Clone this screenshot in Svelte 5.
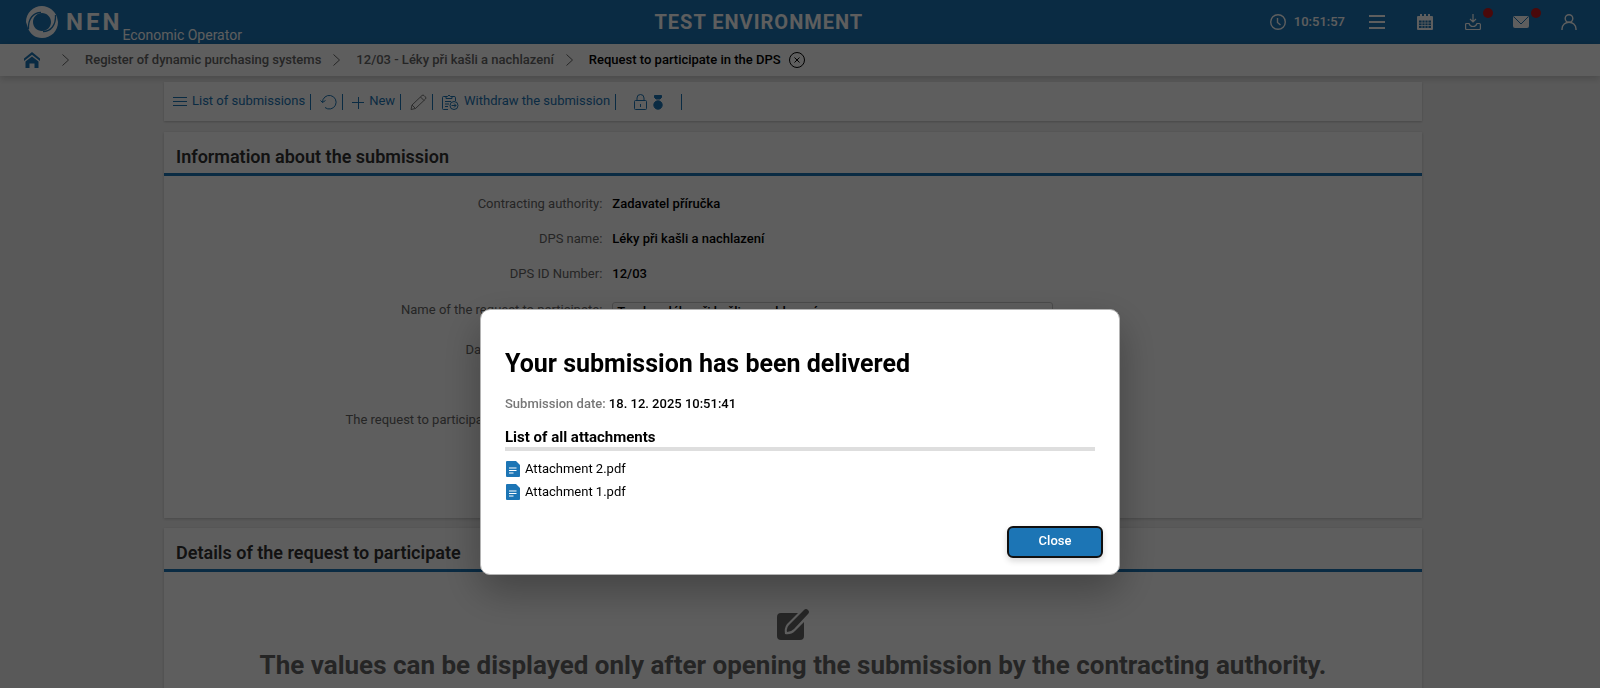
<script lang="ts">
	const crumbs = ['Register of dynamic purchasing systems', '12/03 - Léky při kašli a nachlazení'];

	const fields = [
		{ label: 'Contracting authority', value: 'Zadavatel příručka' },
		{ label: 'DPS name', value: 'Léky při kašli a nachlazení' },
		{ label: 'DPS ID Number', value: '12/03' }
	];

	const attachments = ['Attachment 2.pdf', 'Attachment 1.pdf'];

	let requestName = $state('Tender - léky při kašli a nachlazení');
	let open = $state(true);
</script>

<div class="page">
	<header class="topbar">
		<div class="brand">
			<svg class="logo" viewBox="0 0 32 32" aria-hidden="true">
				<path
					fill="#fff"
					fill-rule="evenodd"
					d="M16 0C23 0 29 5 31 11l1 5C32 25 25 32 16 32 9 32 4 28 2 22L0 16C0 7 7 0 16 0ZM16 7C11 7 7 11 7 16S11 25 16 25s9-4 9-9-4-9-9-9Z"
				/>
				<path fill="none" stroke="#1c75b5" stroke-width="1.3" d="M2.500 23C2 13 7 6.500 15 6.500M29.500 9c.5 10-4.500 16.500-12.500 16.500" />
			</svg>
			<span class="brand-name">NEN</span>
			<span class="brand-role">Economic Operator</span>
		</div>
		<div class="environment">TEST ENVIRONMENT</div>
		<div class="tools">
			<span class="clock">
				<svg width="16" height="16" viewBox="0 0 16 16" fill="none" stroke="#fff" stroke-width="1.4">
					<circle cx="8" cy="8" r="7.3" />
					<path d="M7.500 4v4.500l3 2.500" />
				</svg>
				10:51:57
			</span>
			<button aria-label="Menu">
				<svg width="16" height="16" viewBox="0 0 16 16" stroke="#fff" stroke-width="2.2">
					<path d="M0 2h16M0 8h16M0 14h16" />
				</svg>
			</button>
			<button aria-label="Calendar">
				<svg width="16" height="16" viewBox="0 0 16 16">
					<path
						fill="#fff"
						fill-rule="evenodd"
						d="M3 0h2v2h2V0h2v2h2V0h2v2h2q1 0 1 1v12q0 1-1 1H1q-1 0-1-1V3q0-1 1-1h2ZM2 6.500v7.500h12V6.500Z"
					/>
					<path stroke="#fff" stroke-width=".8" d="M2 9h12M2 11.500h12M5 6v8M8 6v8M11 6v8" />
				</svg>
			</button>
			<button class="marked" aria-label="Downloads">
				<svg width="16" height="16" viewBox="0 0 16 16" fill="none" stroke="#fff" stroke-width="1.2">
					<path d="M8 0v8M5 5l3 3 3-3M4 9.500H1.600q-1 0-1 1v4q0 1 1 1h12.800q1 0 1-1v-4q0-1-1-1H12q-1 3-4 3t-4-3Z" />
				</svg>
			</button>
			<button class="marked" aria-label="Messages">
				<svg width="16" height="16" viewBox="0 0 16 16">
					<rect x="0" y="2" width="16" height="12" rx="2" fill="#fff" />
					<path fill="none" stroke="#1c75b5" d="m1 3 7 7 7-7" />
				</svg>
			</button>
			<button aria-label="User">
				<svg width="16" height="16" viewBox="0 0 16 16" fill="none" stroke="#fff" stroke-width="1.4">
					<circle cx="8" cy="4.5" r="3.8" />
					<path d="M1 16v-1c0-9 14-9 14 0v1" />
				</svg>
			</button>
		</div>
	</header>

	<nav class="breadcrumbs">
		<a class="home" href="#home" aria-label="Home">
			<svg width="16" height="16" viewBox="0 0 16 16" fill="#1c75b5">
				<path d="m8 0 8 6.500V9L8 2.800 0 9V6.500Z" />
				<path d="m8 4.500 6.500 5V16h-4v-4.500h-5V16h-4V9.500Z" />
			</svg>
		</a>
		{#each crumbs as crumb}
			<svg class="chevron" width="7" height="12" viewBox="0 0 7 12"><path d="m.5.5 6 5.500-6 5.500" /></svg>
			<a href="#crumb">{crumb}</a>
		{/each}
		<svg class="chevron" width="7" height="12" viewBox="0 0 7 12"><path d="m.5.5 6 5.500-6 5.500" /></svg>
		<a class="current" href="#current">Request to participate in the DPS</a>
		<button class="crumb-close" aria-label="Close tab">
			<svg width="16" height="16" viewBox="0 0 16 16" fill="none" stroke="#000">
				<circle cx="8" cy="8" r="7.5" />
				<path d="m5.500 5.500 5 5M10.500 5.500l-5 5" />
			</svg>
		</button>
	</nav>

	<main>
		<div class="toolbar">
			<button>
				<svg width="14" height="16" viewBox="0 0 14 16"><path d="M0 3.500h14M0 7.500h14M0 11.500h14" /></svg>
				List of submissions
			</button>
			<button aria-label="Refresh">
				<svg width="17" height="16" viewBox="0 0 17 16">
					<path d="M2.500 8.500A6.800 6.800 0 1 1 5 13.500M.5 6.500l2 2 3-2" />
				</svg>
			</button>
			<button>
				<svg width="12" height="16" viewBox="0 0 12 16"><path d="M0 8.500h12M6.500 3v12" /></svg>
				New
			</button>
			<button aria-label="Edit" disabled>
				<svg width="17" height="16" viewBox="0 0 17 16">
					<path d="M1 15.500 2 11 12 1.500q1-1 2 0l1.500 1.500q1 1 0 2L5.500 14.500ZM2 11l3.500 3.500M10.500 3 14 6.500" />
				</svg>
			</button>
			<button>
				<svg width="17" height="16" viewBox="0 0 17 16">
					<path
						d="M6 15.500H1.500q-1 0-1-1v-11q0-1 1-1H4M10 2.500h2q1.500 0 1.500 1V7M4 4.500v-2h1.500q1.500-3 3 0H10v2ZM3 7.500h6M3 10h4M3 12.500h3"
					/>
					<circle cx="12" cy="11.500" r="4" />
					<path d="M9.500 11.500h4.500M12 9.500l2 2-2 2" />
				</svg>
				Withdraw the submission
			</button>
			<span class="status">
				<svg width="13" height="16" viewBox="0 0 13 16">
					<path d="M1.500 6.500h10q1 0 1 1v7q0 1-1 1h-10q-1 0-1-1v-7q0-1 1-1ZM3 6.500V4q0-3.500 3.500-3.500T10 4v2.500M6.500 10v3" />
				</svg>
				<svg width="10" height="16" viewBox="0 0 10 16">
					<path class="solid" d="M1.500 1.500h7v2L7 5H3L1.500 3.500Z" />
					<circle class="solid" cx="5" cy="11" r="4.200" />
				</svg>
			</span>
		</div>

		<section>
			<h2>Information about the submission</h2>
			<div class="form">
				{#each fields as field}
					<div class="row">
						<span class="label">{field.label}:</span>
						<span class="value">{field.value}</span>
					</div>
				{/each}
				<div class="row input-row">
					<label class="label" for="request-name">Name of the request to participate:</label>
					<input id="request-name" bind:value={requestName} />
				</div>
				<div class="row">
					<span class="label">Date of the submission:</span>
				</div>
				<div class="row spaced">
					<span class="label">The request to participate was submitted by:</span>
				</div>
			</div>
		</section>

		<section>
			<h2>Details of the request to participate</h2>
			<div class="empty">
				<svg width="32" height="32" viewBox="0 0 32 32" fill="#666">
					<path d="M4 4h17L10 15q-3 4-2 10 6 1 10-3L27 13v14q0 4-4 4H4q-4 0-4-4V8q0-4 4-4Z" />
					<path d="M10 23q-1-4 2-7L27 1q2-2 4 0t0 4L17 20q-3 3-7 3Z" />
				</svg>
				<p>The values can be displayed only after opening the submission by the contracting authority.</p>
			</div>
		</section>
	</main>
</div>

{#if open}
	<div class="overlay">
		<div class="modal" role="dialog" aria-modal="true" aria-labelledby="modal-title">
			<div class="modal-body">
				<h1 id="modal-title">Your submission has been delivered</h1>
				<p class="date"><span>Submission date:</span> 18. 12. 2025 10:51:41</p>
				<h3>List of all attachments</h3>
				<ul>
					{#each attachments as name}
						<li>
							<a href="#attachment">
								<svg width="14" height="16" viewBox="0 0 14 16">
									<path fill="#1c75b5" d="M1 0h9l4 4v11q0 1-1 1H1q-1 0-1-1V1q0-1 1-1Z" />
									<path stroke="#fff" stroke-width="1.2" d="M3 7h7.500M3 9.500h7.500M3 12h4.500" />
								</svg>
								{name}
							</a>
						</li>
					{/each}
				</ul>
			</div>
			<div class="modal-footer">
				<button class="close" onclick={() => (open = false)}>Close</button>
			</div>
		</div>
	</div>
{/if}

<style>
	:global(body) {
		overflow: hidden;
		background: #f2f2f2;
	}

	.page,
	.overlay {
		font: 13px/16px Roboto, sans-serif;
		color: #000;
	}

	button,
	input {
		font: inherit;
	}

	button {
		padding: 0;
		border: 0;
		background: none;
	}

	svg {
		display: block;
		flex-shrink: 0;
	}

	a {
		color: inherit;
		text-decoration: none;
	}

	.page {
		height: 100vh;
		overflow: hidden;
	}

	.topbar {
		display: flex;
		align-items: center;
		justify-content: space-between;
		height: 44px;
		padding: 0 23px 0 26px;
		background: #1c75b5;
		color: #fff;
	}

	.brand {
		display: flex;
		align-items: center;
		height: 44px;
	}

	.logo {
		width: 32px;
		height: 32px;
	}

	.brand-name {
		margin-left: 8px;
		font-size: 24px;
		font-weight: 700;
		letter-spacing: 3px;
	}

	.brand-role {
		align-self: flex-end;
		padding: 0 6px 1px 0;
		font-size: 14px;
	}

	.environment {
		font-size: 20px;
		font-weight: 700;
		letter-spacing: 1px;
	}

	.tools {
		display: flex;
		align-items: center;
		gap: 32px;
	}

	.tools button {
		color: #fff;
	}

	.clock {
		display: flex;
		align-items: center;
		gap: 8px;
		margin-right: -8px;
		font-weight: 500;
	}

	.marked {
		position: relative;
	}

	.marked::after {
		content: '';
		position: absolute;
		top: -6px;
		right: -12px;
		width: 10px;
		height: 10px;
		border-radius: 50%;
		background: #c81a1e;
	}

	.breadcrumbs {
		display: flex;
		align-items: center;
		height: 32px;
		padding: 0 24px;
		background: #fff;
		box-shadow: 0 2px 8px rgba(0, 0, 0, 0.2);
		color: #666;
		font-weight: 500;
	}

	.chevron {
		margin: 0 16px 0 12px;
		fill: none;
		stroke: #666;
	}

	.home + .chevron {
		margin-left: 22px;
	}

	.current {
		color: #000;
	}

	.crumb-close {
		margin-left: 8px;
	}

	main {
		max-width: 1258px;
		margin: 0 auto;
		padding: 6px 14px 0 0;
	}

	.toolbar {
		display: flex;
		align-items: center;
		height: 39px;
		background: #fff;
		box-shadow: 0 1px 2px rgba(0, 0, 0, 0.2);
	}

	.toolbar button,
	.status {
		display: flex;
		align-items: flex-start;
		gap: 5px;
		height: 16px;
		padding: 0 5px 0 9px;
		border-right: 1px solid #1c75b5;
		color: #1c75b5;
		line-height: 14px;
	}

	.toolbar svg {
		fill: none;
		stroke: #1c75b5;
	}

	.toolbar button:disabled svg {
		stroke: #777;
	}

	.toolbar .solid {
		fill: #1c75b5;
	}

	.toolbar .status {
		gap: 6px;
		padding: 0 18px;
	}

	section {
		margin-top: 11px;
		background: #fff;
		box-shadow: 0 1px 3px rgba(0, 0, 0, 0.2);
	}

	section + section {
		margin-top: 10px;
	}

	h2 {
		margin: 0;
		padding: 13px 12px 4px;
		border-bottom: 3px solid #1c75b5;
		color: #333;
		font-size: 18px;
		line-height: 24px;
		font-weight: 600;
	}

	.form {
		padding: 10px 0 81px;
	}

	.row {
		display: flex;
		align-items: center;
		height: 35px;
	}

	.label {
		box-sizing: border-box;
		width: 35%;
		padding-right: 2px;
		text-align: right;
		color: #666;
	}

	.value {
		padding-left: 8px;
		font-weight: 500;
	}

	.input-row {
		height: 41px;
	}

	.input-row .label {
		padding-bottom: 3px;
	}

	.input-row input {
		box-sizing: border-box;
		width: 35%;
		height: 20px;
		margin-left: 8px;
		padding: 0 4px;
		border: 1px solid #ccc;
		border-radius: 3px;
		background: #fff;
		font-weight: 500;
	}

	.spaced {
		margin-top: 35px;
	}

	.empty {
		display: flex;
		flex-direction: column;
		align-items: center;
		padding: 37px 12px 24px;
	}

	.empty p {
		margin: 8px 0 0;
		color: #666;
		font-size: 26px;
		line-height: 32px;
		font-weight: 700;
		text-align: center;
	}

	.overlay {
		position: fixed;
		inset: 0;
		display: flex;
		align-items: flex-start;
		justify-content: center;
		box-sizing: border-box;
		padding-top: 309px;
		background: rgba(0, 0, 0, 0.63);
	}

	.modal {
		box-sizing: border-box;
		width: 640px;
		border: 1px solid #b4b4b4;
		border-radius: 10px;
		background: #fff;
		box-shadow: 0 16px 40px rgba(0, 0, 0, 0.3);
	}

	.modal-body {
		padding: 37px 24px 0;
	}

	h1 {
		margin: 0;
		font-size: 25px;
		line-height: 34px;
		font-weight: 700;
	}

	.date {
		margin: 15px 0 0;
		font-weight: 500;
	}

	.date span {
		color: #777;
	}

	h3 {
		margin: 16px 0 0;
		border-bottom: 4px solid #dedede;
		font-size: 15px;
		line-height: 19px;
		font-weight: 700;
	}

	ul {
		margin: 6px 0 0;
		padding: 0;
		list-style: none;
	}

	li a {
		display: flex;
		align-items: center;
		gap: 5px;
		height: 23px;
		padding-left: 1px;
	}

	.modal-footer {
		display: flex;
		justify-content: flex-end;
		padding: 23px 16px 16px;
	}

	.close {
		width: 96px;
		height: 32px;
		padding-bottom: 3px;
		border: 2px solid #101010;
		border-radius: 6px;
		background: #1c75b5;
		box-shadow: 0 3px 6px rgba(0, 0, 0, 0.16);
		color: #fff;
		font-weight: 500;
	}
</style>
